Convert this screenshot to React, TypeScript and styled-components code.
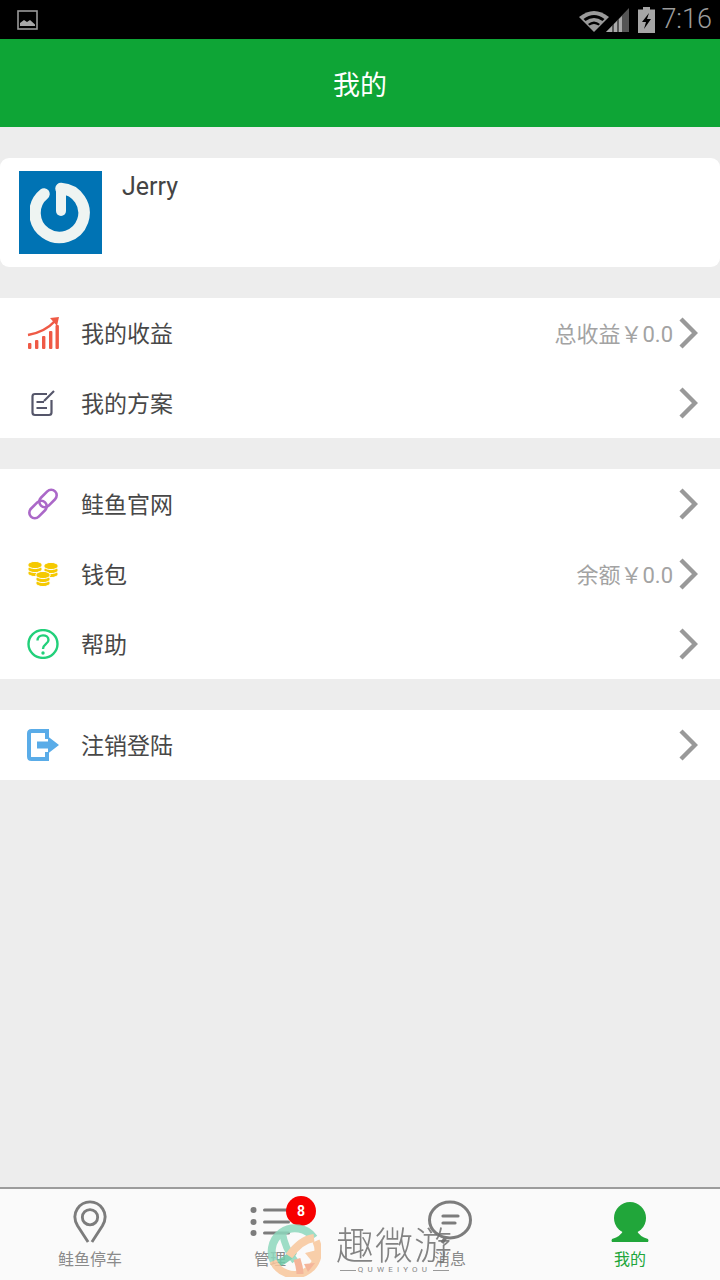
import styled, { createGlobalStyle } from 'styled-components'

const GlobalStyle = createGlobalStyle`
html, body {
  margin: 0;
  padding: 0;
  background: #ededed;
}
* {
  box-sizing: border-box;
}
`

const Page = styled.div`
position: relative;
width: 720px;
height: 1280px;
display: flex;
flex-direction: column;
overflow: hidden;
background-color: #ededed;
font-family: "Roboto", "Noto Sans CJK SC", sans-serif;
`

const StatusBar = styled.div`
height: 39px;
background-color: #000;
display: flex;
align-items: center;
padding: 0 8px 0 17px;
flex-shrink: 0;
`

const StatusRight = styled.div`
margin-left: auto;
display: flex;
align-items: center;
`

const BatteryIcon = styled.svg`
margin-left: 9px;
`

const Clock = styled.span`
color: #9c9c9c;
font-size: 27px;
font-weight: 300;
margin-left: 6px;
line-height: 39px;
`

const Header = styled.div`
height: 88px;
background-color: #0ea536;
color: #fff;
font-size: 27px;
display: flex;
align-items: center;
justify-content: center;
flex-shrink: 0;
`

const Content = styled.div`
flex: 1;
padding-top: 31px;
display: flex;
flex-direction: column;
gap: 31px;
`

const ProfileCard = styled.div`
height: 109px;
background-color: #fff;
border-radius: 9px;
padding: 13px 19px;
display: flex;
gap: 20px;
`

const Avatar = styled.div`
width: 83px;
height: 83px;
background-color: #0073b4;
display: flex;
align-items: center;
justify-content: center;
`

const AvatarMark = styled.svg`
filter: blur(0.7px);
`

const UserName = styled.div`
font-size: 25px;
color: #444;
line-height: 32px;
`

const Group = styled.div`
background-color: #fff;
`

const Row = styled.div`
height: 70px;
display: flex;
align-items: center;
padding: 0 22px 0 27px;
`

const RowIcon = styled.div`
width: 34px;
height: 36px;
margin-right: 20px;
display: flex;
align-items: center;
justify-content: flex-start;
`

const RowLabel = styled.span`
font-size: 23px;
color: #484848;
margin-top: -2px;
`

const RowValue = styled.span`
margin-left: auto;
margin-right: 6px;
margin-top: -2px;
font-size: 22px;
color: #a3a3a3;
`

const Chevron = styled.svg<{ $auto: boolean }>`
margin-left: ${(p) => (p.$auto ? 'auto' : '0')};
flex-shrink: 0;
`

const TabBar = styled.div`
height: 93px;
background-color: #fafafa;
border-top: 2px solid #9c9c9c;
display: grid;
grid-template-columns: repeat(4, 1fr);
flex-shrink: 0;
`

const Tab = styled.div<{ $active?: boolean }>`
display: flex;
flex-direction: column;
align-items: center;
color: ${(p) => (p.$active ? '#21a63a' : '#8a8a8a')};
font-size: 16px;
`

const TabIcon = styled.div`
position: relative;
height: 48px;
margin-top: 9px;
display: flex;
align-items: center;
justify-content: center;
`

const TabLabel = styled.span`
line-height: 22px;
margin-top: 3px;
`

const Badge = styled.span`
position: absolute;
top: -2px;
right: -26px;
width: 30px;
height: 30px;
border-radius: 50%;
background-color: #f70000;
color: #fff;
font-size: 14px;
font-weight: 700;
display: flex;
align-items: center;
justify-content: center;
`

const Watermark = styled.div`
position: absolute;
left: 267px;
top: 1223px;
display: flex;
gap: 15px;
pointer-events: none;
`

const WatermarkText = styled.div`
display: flex;
flex-direction: column;
align-items: center;
color: #6f6f6f;
`

const WatermarkTitle = styled.span`
font-size: 38px;
font-weight: 300;
line-height: 46px;
letter-spacing: 1px;
opacity: 0.85;
`

const WatermarkSub = styled.span`
display: flex;
align-items: center;
gap: 2px;
margin-top: -4px;
font-size: 8px;
letter-spacing: 4.2px;
line-height: 10px;
color: #888;
white-space: nowrap;
&::before,
&::after {
  content: "";
  width: 16px;
  height: 1px;
  background-color: #999;
}
`

const ChevronIcon = ({ auto }: { auto: boolean }) => (
  <Chevron $auto={auto} width="19" height="32" viewBox="0 0 19 32">
    <path d="M2 2 L16 16 L2 30" fill="none" stroke="#999" strokeWidth="4.4" />
  </Chevron>
)

const CoinStack = ({ x, y, layers }: { x: number; y: number; layers: number }) => (
  <g fill="#f5c900" stroke="#fff" strokeWidth="1">
    {Array.from({ length: layers }).map((_, i) => (
      <ellipse key={i} cx={x} cy={y + (layers - 1 - i) * 4} rx="7.2" ry="3.6" />
    ))}
  </g>
)

const rows = [
  [
    {
      label: '我的收益',
      value: '总收益￥0.0',
      icon: (
        <svg width="32" height="32" viewBox="0 0 32 32">
          <path d="M1 18 Q18 15 28 4" fill="none" stroke="#ef5a46" strokeWidth="2.6" />
          <path d="M23 1 L32 0 L30 9 Z" fill="#ef5a46" />
          <g fill="#ef5a46">
            <rect x="1" y="26" width="3.4" height="6" rx="1" />
            <rect x="8" y="23" width="3.4" height="9" rx="1" />
            <rect x="15" y="19" width="3.4" height="13" rx="1" />
            <rect x="22" y="14" width="3.4" height="18" rx="1" />
            <rect x="28.5" y="8" width="3.4" height="24" rx="1" />
          </g>
        </svg>
      ),
    },
    {
      label: '我的方案',
      icon: (
        <svg width="32" height="27" viewBox="0 0 32 27">
          <g fill="none" stroke="#55566a" strokeWidth="2.2">
            <path d="M20 4 H8 Q5.5 4 5.5 6.5 V22.5 Q5.5 25 8 25 H22 Q24.5 25 24.5 22.5 V10" />
            <path d="M17 11 L27 1" />
            <path d="M9.5 12 H17 M9.5 18 H20" />
          </g>
        </svg>
      ),
    },
  ],
  [
    {
      label: '鲑鱼官网',
      icon: (
        <svg width="32" height="32" viewBox="0 0 32 32" fill="none" stroke="#ab68c8" strokeWidth="2.6">
          <rect x="11" y="5" width="20" height="11" rx="5.5" transform="rotate(-45 21 10.5)" />
          <rect x="1" y="16" width="20" height="11" rx="5.5" transform="rotate(-45 11 21.5)" />
        </svg>
      ),
    },
    {
      label: '钱包',
      value: '余额￥0.0',
      icon: (
        <svg width="32" height="26" viewBox="0 0 32 26">
          <CoinStack x={8} y={4} layers={3} />
          <CoinStack x={24} y={5} layers={3} />
          <CoinStack x={16} y={14} layers={3} />
        </svg>
      ),
    },
    {
      label: '帮助',
      icon: (
        <svg width="32" height="30" viewBox="0 0 32 30" fill="none">
          <ellipse cx="16" cy="15" rx="14.5" ry="13.9" stroke="#22d07a" strokeWidth="2.4" />
          <path d="M10.5 11.5 C10.5 4.5 21.5 5 21.5 11 C21.5 15 16 15 16 20" stroke="#22d07a" strokeWidth="2.4" />
          <circle cx="16" cy="24" r="1.7" fill="#22d07a" />
        </svg>
      ),
    },
  ],
  [
    {
      label: '注销登陆',
      icon: (
        <svg width="32" height="32" viewBox="0 0 32 32">
          <path d="M20 10 V2 H4.5 Q2 2 2 4.5 V27.5 Q2 30 4.5 30 H20 V23" fill="none" stroke="#5aace8" strokeWidth="4" />
          <path d="M10 12.5 H21 V7.5 L32 16 L21 24.5 V19.5 H10 Z" fill="#5aace8" />
        </svg>
      ),
    },
  ],
]

const App = () => {
  return (
    <Page>
      <GlobalStyle />
      <StatusBar>
        <svg width="22" height="20" viewBox="0 0 22 20">
          <rect x="1" y="1" width="19" height="18" fill="none" stroke="#9a9a9a" strokeWidth="1.6" />
          <path d="M3 16 L3 13 L7 10 L10 12 L13 10 L18 14.5 V16 Z" fill="#a8a8a8" />
        </svg>
        <StatusRight>
          <svg width="50" height="26" viewBox="0 0 50 26">
            <path d="M0 10 Q15 -2 30 10 L15 25 Z" fill="#9a9a9a" />
            <path d="M4.5 12 Q15 4 25.5 12 L23.5 14 Q15 8 6.5 14 Z" fill="#000" />
            <path d="M9 17 Q15 12 21 17 L19.5 18.5 Q15 15.5 10.5 18.5 Z" fill="#000" />
            <path d="M27 25 L50 1 V25 Z" fill="#555" />
            <path d="M27 25 L33 19 V25 Z M35 25 V17 L38 14 V25 Z M40 25 V12 L43 9 V25 Z" fill="#aaa" />
          </svg>
          <BatteryIcon width="17" height="26" viewBox="0 0 17 26">
            <path d="M5 0 H12 V2.5 H17 V26 H0 V2.5 H5 Z" fill="#a6a6a6" />
            <path d="M11 6 L4 15 H8 L6 22 L13 12 H9 Z" fill="#000" />
          </BatteryIcon>
          <Clock>7:16</Clock>
        </StatusRight>
      </StatusBar>
      <Header>我的</Header>
      <Content>
        <ProfileCard>
          <Avatar>
            <AvatarMark width="62" height="62" viewBox="0 0 62 62" fill="none">
              <path d="M14 12 A24.5 24.5 0 1 0 31 6.5" stroke="#eef4f2" strokeWidth="11.5" strokeLinecap="round" />
              <path d="M31 9 V29" stroke="#eef4f2" strokeWidth="10" strokeLinecap="round" />
            </AvatarMark>
          </Avatar>
          <UserName>Jerry</UserName>
        </ProfileCard>
        {rows.map((group, i) => (
          <Group key={i}>
            {group.map((row) => {
              const value = 'value' in row ? row.value : undefined
              return (
                <Row key={row.label}>
                  <RowIcon>{row.icon}</RowIcon>
                  <RowLabel>{row.label}</RowLabel>
                  {value ? <RowValue>{value}</RowValue> : null}
                  <ChevronIcon auto={!value} />
                </Row>
              )
            })}
          </Group>
        ))}
      </Content>
      <TabBar>
        <Tab>
          <TabIcon>
            <svg width="36" height="44" viewBox="0 0 36 46" fill="none" stroke="#7c7c7c" strokeWidth="3">
              <path d="M16 44 L5 27 C-3 13 8 2 18 2 C28 2 39 13 31 27 L20 44" />
              <circle cx="18" cy="18" r="8" />
            </svg>
          </TabIcon>
          <TabLabel>鲑鱼停车</TabLabel>
        </Tab>
        <Tab>
          <TabIcon>
            <svg width="40" height="34" viewBox="0 0 40 34" fill="#7c7c7c">
              <circle cx="3.5" cy="5" r="3" />
              <circle cx="3.5" cy="17" r="3" />
              <circle cx="3.5" cy="28" r="3" />
              <rect x="13" y="3.5" width="27" height="3" rx="1.5" />
              <rect x="13" y="15.5" width="27" height="3" rx="1.5" />
              <rect x="13" y="26.5" width="27" height="3" rx="1.5" />
            </svg>
            <Badge>8</Badge>
          </TabIcon>
          <TabLabel>管理</TabLabel>
        </Tab>
        <Tab>
          <TabIcon>
            <svg width="44" height="44" viewBox="0 0 44 44" fill="none" stroke="#7c7c7c" strokeWidth="3">
              <ellipse cx="22" cy="20" rx="20.5" ry="18" />
              <path d="M18 37 L14 43" strokeWidth="3.5" />
              <path d="M15 16 H30 M15 23 H27" strokeWidth="3.2" strokeLinecap="round" />
            </svg>
          </TabIcon>
          <TabLabel>消息</TabLabel>
        </Tab>
        <Tab $active>
          <TabIcon>
            <svg width="38" height="42" viewBox="0 0 38 42" fill="#21a63a">
              <circle cx="19" cy="17" r="16" />
              <path d="M12 30 H26 Q28 35 37 38 Q38 40 37 41 H1 Q0 40 1 38 Q10 35 12 30 Z" />
            </svg>
          </TabIcon>
          <TabLabel>我的</TabLabel>
        </Tab>
      </TabBar>
      <Watermark>
        <svg width="54" height="54" viewBox="0 0 54 54" fill="none" opacity="0.85">
          <path d="M9 42 A23 23 0 0 1 47 15" stroke="#8ed8bd" strokeWidth="8" />
          <path d="M15 8 C17 20 21 30 28 38" stroke="#8ed8bd" strokeWidth="7" />
          <path d="M8 41 C14 40 20 36 26 30" stroke="#6fcaa8" strokeWidth="7" strokeLinecap="round" />
          <path d="M6 38 A23.5 23.5 0 0 0 49 18" stroke="#f8c79c" strokeWidth="7.5" />
          <path d="M22 33 C30 22 38 16 47 15" stroke="#f8c79c" strokeWidth="8" />
          <path d="M30 36 C32 42 33 46 33 51" stroke="#f4a98a" strokeWidth="7" />
          <path d="M38 30 L50 27 L48 42 Z" fill="#f8c79c" />
          <path d="M37 41 L48 40 L41 49 Z" fill="#f4a98a" />
        </svg>
        <WatermarkText>
          <WatermarkTitle>趣微游</WatermarkTitle>
          <WatermarkSub>QUWEIYOU</WatermarkSub>
        </WatermarkText>
      </Watermark>
    </Page>
  )
}

export default App
